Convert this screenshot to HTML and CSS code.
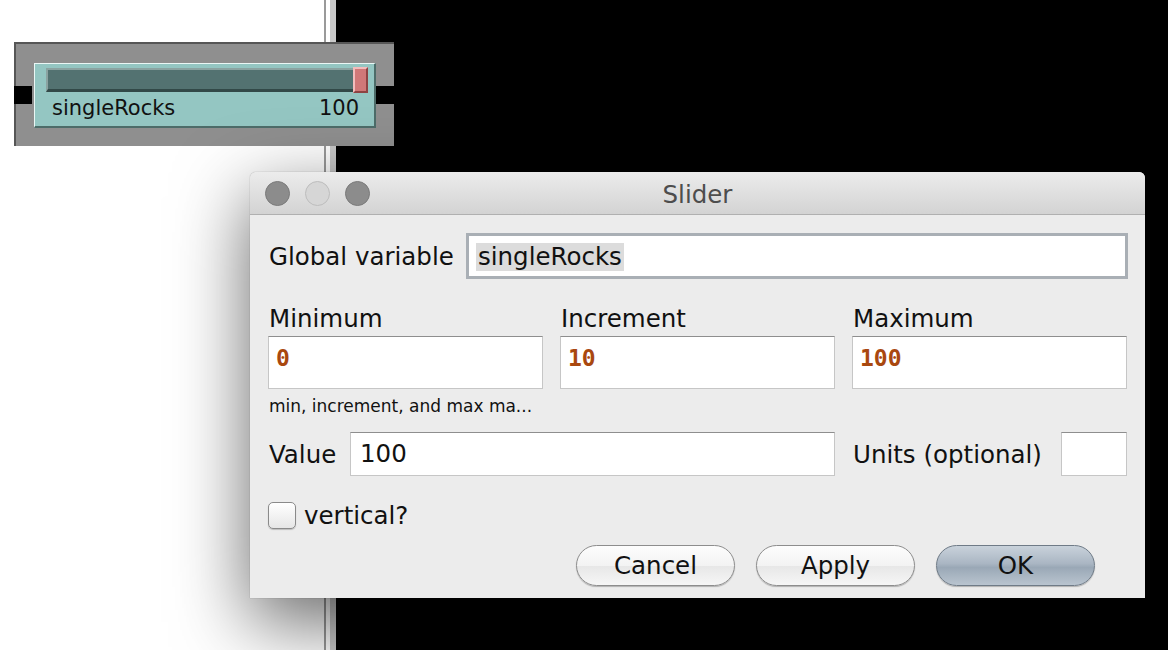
FILE: index.html
```html
<!DOCTYPE html>
<html>
<head>
<meta charset="utf-8">
<link rel="stylesheet" href="styles.css">
</head>
<body>
<div class="desk">
  <div class="pane-white"></div>
  <div class="divider"><span class="d1"></span><span class="d2"></span><span class="d3"></span></div>
  <div class="pane-black"></div>

  <div class="sel">
    <span class="handle h-left"></span>
    <span class="handle h-right"></span>
    <div class="slider">
      <div class="track-row">
        <div class="track"></div>
        <div class="thumb"></div>
      </div>
      <div class="slider-label">
        <span>singleRocks</span>
        <span>100</span>
      </div>
    </div>
  </div>

  <div class="dialog">
    <div class="titlebar">
      <div class="lights">
        <span class="light dark"></span>
        <span class="light pale"></span>
        <span class="light dark"></span>
      </div>
      <div class="title">Slider</div>
      <div></div>
    </div>
    <div class="body">
      <div class="row-var">
        <span class="lbl">Global variable</span>
        <div class="field-focus"><span class="selected">singleRocks</span></div>
      </div>
      <div class="grid3 labels">
        <span class="lbl">Minimum</span>
        <span class="lbl">Increment</span>
        <span class="lbl">Maximum</span>
      </div>
      <div class="grid3">
        <div class="box mono">0</div>
        <div class="box mono">10</div>
        <div class="box mono">100</div>
      </div>
      <div class="hint">min, increment, and max ma...</div>
      <div class="grid3 value-row">
        <div class="value-cell">
          <span class="lbl">Value</span>
          <div class="vbox value-box">100</div>
        </div>
        <div class="units-cell">
          <span class="lbl">Units (optional)</span>
          <div class="vbox units-box"></div>
        </div>
      </div>
      <div class="check-row">
        <span class="checkbox"></span>
        <span class="lbl">vertical?</span>
      </div>
      <div class="buttons">
        <div class="btn">Cancel</div>
        <div class="btn">Apply</div>
        <div class="btn btn-ok">OK</div>
      </div>
    </div>
  </div>
</div>
</body>
</html>
```
FILE: styles.css
```css
* { box-sizing: border-box; }
html, body { margin: 0; padding: 0; }
body {
  width: 1168px;
  height: 650px;
  overflow: hidden;
  font-family: "DejaVu Sans", "Liberation Sans", sans-serif;
  background: #000;
}
.desk {
  position: relative;
  display: flex;
  width: 1168px;
  height: 650px;
}
.pane-white { width: 324px; background: #fff; }
.divider { display: flex; width: 12px; }
.divider .d1 { width: 2px; background: #9a9a9a; }
.divider .d2 { width: 4px; background: #fff; }
.divider .d3 { width: 6px; background: #c9c9c9; }
.pane-black { flex: 1; background: #000; }

/* slider widget (selected) */
.sel {
  position: absolute;
  left: 14px;
  top: 42px;
  width: 380px;
  height: 104px;
  background: #8f8f8f;
  border-top: 2px solid #565656;
  border-left: 2px solid #565656;
  padding: 19px 0 0 18px;
}
.handle {
  position: absolute;
  top: 42px;
  width: 18px;
  height: 18px;
  background: #000;
}
.h-left { left: -2px; }
.h-right { left: 360px; }
.slider {
  position: relative;
  width: 342px;
  height: 65px;
  background: #94c6c2;
  border-top: 1px solid #eaf7f5;
  border-left: 1px solid #eaf7f5;
  border-right: 2px solid #4d6c69;
  border-bottom: 2px solid #4d6c69;
  padding: 3px 5px 0 11px;
}
.track-row { display: flex; align-items: flex-start; }
.track {
  width: 307px;
  height: 24px;
  margin-top: 1px;
  background: #537271;
  border-top: 2px solid #8ba3a1;
  border-left: 2px solid #8ba3a1;
  border-bottom: 3px solid #324948;
}
.thumb {
  width: 15px;
  height: 26px;
  background: #d07878;
  border-top: 2px solid #f2bcbc;
  border-left: 2px solid #f2bcbc;
  border-right: 2px solid #8e4343;
  border-bottom: 2px solid #8e4343;
}
.slider-label {
  display: flex;
  justify-content: space-between;
  padding: 0 10px 0 6px;
  margin-top: 3px;
  font-size: 21px;
  line-height: 24px;
  color: #111;
}

/* dialog */
.dialog {
  position: absolute;
  left: 250px;
  top: 172px;
  width: 895px;
  height: 426px;
  background: #ececec;
  border-radius: 6px 6px 0 0;
  box-shadow: 0 24px 75px rgba(0, 0, 0, 0.6), 0 0 1px rgba(0, 0, 0, 0.5);
  display: flex;
  flex-direction: column;
}
.titlebar {
  height: 43px;
  flex: none;
  display: grid;
  grid-template-columns: 1fr auto 1fr;
  align-items: center;
  background: linear-gradient(#ececec, #d3d3d3);
  border-bottom: 1px solid #b0b0b0;
  border-radius: 6px 6px 0 0;
}
.lights { display: flex; gap: 15px; padding-left: 15px; }
.light {
  width: 25px;
  height: 25px;
  border-radius: 50%;
}
.light.dark { background: #8c8c8c; border: 1px solid #7a7a7a; }
.light.pale { background: #d6d6d6; border: 1px solid #bdbdbd; }
.title {
  font-size: 24.5px;
  color: #4d4d4d;
  line-height: 30px;
  padding-top: 4px;
}
.body {
  flex: 1;
  padding: 18px 17px 12px 18px;
  display: flex;
  flex-direction: column;
  color: #111;
}
.lbl { font-size: 24.5px; padding-left: 1px; }
.row-var {
  display: flex;
  align-items: center;
  justify-content: space-between;
  height: 46px;
}
.field-focus {
  width: 662px;
  height: 46px;
  background: #fff;
  border: 3px solid #a9afb5;
  padding: 7px 0 0 7px;
}
.selected {
  display: inline-block;
  background: #dcdcdc;
  padding: 0 2px;
  font-size: 24.5px;
  line-height: 28px;
}
.grid3 {
  display: grid;
  grid-template-columns: repeat(3, 275px);
  column-gap: 17px;
}
.labels {
  margin-top: 24px;
  margin-bottom: 1px;
  line-height: 32px;
}
.box {
  height: 53px;
  background: #fff;
  border: 1px solid #c6c6c6;
  border-top-color: #8e8e8e;
  padding: 8px 0 0 7px;
}
.mono {
  font-family: "DejaVu Sans Mono", "Liberation Mono", monospace;
  font-size: 23px;
  line-height: 26px;
  color: #a9480f;
  font-weight: bold;
}
.hint {
  margin-top: 7px;
  font-size: 17px;
  line-height: 20px;
  padding-left: 1px;
}
.value-row { margin-top: 16px; height: 44px; }
.value-cell {
  grid-column: 1 / span 2;
  display: flex;
  align-items: center;
  justify-content: space-between;
}
.units-cell {
  display: flex;
  align-items: center;
  justify-content: space-between;
}
.vbox {
  height: 44px;
  background: #fff;
  border: 1px solid #c6c6c6;
  border-top-color: #8e8e8e;
}
.value-box {
  width: 485px;
  padding-left: 9px;
  font-size: 24.5px;
  line-height: 42px;
}
.units-box { width: 66px; }
.check-row {
  margin-top: 26px;
  display: flex;
  align-items: center;
  gap: 8px;
  height: 27px;
}
.checkbox {
  width: 28px;
  height: 27px;
  border: 1px solid #8a8a8a;
  border-radius: 5px;
  background: linear-gradient(#ffffff, #e6e6e6);
  box-shadow: 0 1px 1px rgba(0, 0, 0, 0.2);
}
.check-row .lbl { padding-left: 0; }
.buttons {
  margin-top: 16px;
  display: flex;
  justify-content: flex-end;
  gap: 21px;
  padding-right: 33px;
}
.btn {
  width: 159px;
  height: 41px;
  border-radius: 21px;
  border: 1px solid #8d8d8d;
  background: linear-gradient(#fdfdfd, #f3f3f3 50%, #e7e7e7 52%, #f6f6f6);
  box-shadow: 0 1px 1px rgba(0, 0, 0, 0.25);
  display: flex;
  align-items: center;
  justify-content: center;
  font-size: 24.5px;
  color: #111;
}
.btn-ok {
  border-color: #6f7b87;
  background: linear-gradient(#c9d2db, #aab6c3 45%, #9aa8b6 55%, #b9c4cf);
}
```
